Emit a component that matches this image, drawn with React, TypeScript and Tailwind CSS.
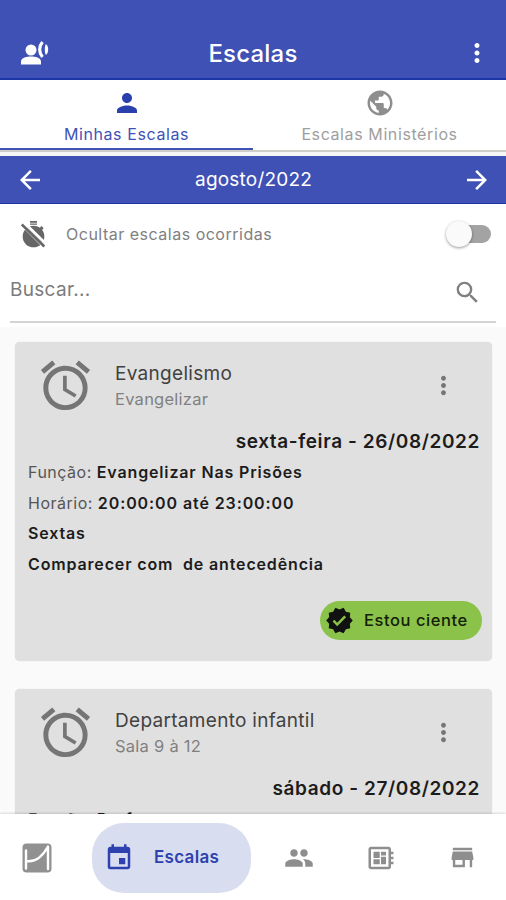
import {
  MdAccessAlarm,
  MdArrowBack,
  MdArrowForward,
  MdEvent,
  MdMoreVert,
  MdOutlineDeveloperBoard,
  MdPeople,
  MdPerson,
  MdPublic,
  MdSearch,
  MdStore,
  MdVerified,
} from "react-icons/md";

const schedules = [
  {
    title: "Evangelismo",
    subtitle: "Evangelizar",
    date: "sexta-feira - 26/08/2022",
    role: "Evangelizar Nas Prisões",
    time: "20:00:00 até 23:00:00",
    event: "Sextas",
    note: "Comparecer com  de antecedência",
  },
  {
    title: "Departamento infantil",
    subtitle: "Sala 9 à 12",
    date: "sábado - 27/08/2022",
    role: "Professora",
    time: "09:00:00 até 12:00:00",
    event: "Sábados",
    note: "Comparecer com  de antecedência",
  },
];

function VoiceIcon() {
  return (
    <svg width="30" height="26" viewBox="0 0 30 26" fill="currentColor">
      <circle cx="11" cy="10" r="5.5" />
      <path d="M1 24.500v-3c0-4 6-5 10-5s10 1 10 5v3z" />
      <path d="M22.500 2c-3.800 4.500-3.800 10.500 0 15" fill="none" stroke="currentColor" strokeWidth="3.200" />
      <path d="M25.500 4.500h1c2.200 2.500 2.200 7.500 0 10h-1c-1-3-1-7 0-10z" />
    </svg>
  );
}

function TimerOffIcon() {
  return (
    <svg width="26" height="28" viewBox="0 0 26 28" fill="currentColor">
      <path d="M9 1h7v1.800H9zM9 3.400h7v1.400H9z" />
      <circle cx="12.500" cy="16.500" r="10.800" />
      <path d="m18.500 8 2-2 2.200 2.200-2 2z" />
      <path d="m2.500 2 23 22.500" fill="none" stroke="white" strokeWidth="3" />
      <path d="m.8 4.500 22.500 22.500" fill="none" stroke="white" strokeWidth="3" />
      <path d="m.8 4.500 22.500 22" fill="none" stroke="currentColor" strokeWidth="2.600" />
    </svg>
  );
}

function LogoIcon() {
  return (
    <svg width="30" height="30" viewBox="0 0 30 30" fill="none">
      <rect x=".5" y=".5" width="29" height="29" rx="4" fill="#919191" />
      <path
        d="M4 7.500v18M4 18c9 1.500 16-3.500 22-14.500v22.500"
        stroke="white"
        strokeWidth="2.400"
        strokeLinejoin="round"
        strokeLinecap="round"
      />
    </svg>
  );
}

function ScheduleCard({ item }: { item: (typeof schedules)[number] }) {
  return (
    <article className="h-[319px] shrink-0 rounded-[5px] bg-[#e0e0e0] shadow-[0_0_1px_#ccc]">
      <div className="flex h-[84px] items-start pl-[21px] pt-[15px]">
        <MdAccessAlarm size={59} className="-mt-[1px] text-[#757575]" />
        <div className="ml-[20px] flex-1 pt-[4px]">
          <h2 className="text-[19px] leading-[26px] tracking-[0.3px] text-[#424242]">{item.title}</h2>
          <p className="text-[16.5px] leading-[25px] tracking-[0.25px] text-[#808080]">{item.subtitle}</p>
        </div>
        <MdMoreVert size={29} className="mr-[34px] mt-[14px] text-[#757575]" />
      </div>
      <p className="pr-[12px] text-right text-[19px] font-semibold leading-[31px] tracking-[0.6px] text-[#1c1c1c]">
        {item.date}
      </p>
      <div className="whitespace-pre pl-[13px] text-[16px] leading-[30.500px] text-[#1c1c1c]">
        <p>
          <span className="tracking-[0.5px] text-[#555]">Função: </span>
          <span className="font-semibold tracking-[0.85px]">{item.role}</span>
        </p>
        <p>
          <span className="tracking-[0.5px] text-[#555]">Horário: </span>
          <span className="font-semibold tracking-[0.9px]">{item.time}</span>
        </p>
        <p className="font-semibold tracking-[0.85px]">{item.event}</p>
        <p className="font-semibold tracking-[0.85px]">{item.note}</p>
      </div>
      <div className="mt-[22px] flex justify-end pr-[10px]">
        <button className="flex h-[39px] w-[162px] items-center rounded-full bg-[#8bc34a] pl-[5px] text-[#142006]">
          <MdVerified size={29} className="text-[#111]" />
          <span className="ml-[10px] text-[16.5px] font-medium tracking-[0.55px]">Estou ciente</span>
        </button>
      </div>
    </article>
  );
}

export default function App() {
  return (
    <div className="flex h-[900px] w-[506px] flex-col overflow-hidden bg-[#fafafa] font-['Inter','Liberation_Sans',sans-serif]">
      <header className="flex h-[80px] shrink-0 items-center border-b-2 border-[#1d36a5] bg-[#3f51b5] pl-[20px] pr-[14px] pt-[27px] text-white">
        <VoiceIcon />
        <h1 className="flex-1 pr-[6px] pt-[2px] text-center text-[24px] font-medium tracking-[0.2px]">Escalas</h1>
        <MdMoreVert size={30} />
      </header>

      <nav className="flex h-[76px] shrink-0 border-b-4 border-[#f5f5f5] bg-white text-[16px]">
        <button className="flex flex-1 flex-col items-center border-b-2 border-[#cfcdca]">
          <span className="flex w-full flex-1 flex-col items-center border-b-2 border-[#3f51b5] pt-[8px] text-[#3f51b5]">
            <MdPerson size={30} className="text-[#2a41ad]" />
            <span className="mt-[3px] leading-[26px] tracking-[0.6px]">Minhas Escalas</span>
          </span>
        </button>
        <button className="flex flex-1 flex-col items-center border-b-2 border-[#cfcdca] pt-[8px] text-[#9e9e9e]">
          <MdPublic size={30} className="text-[#8e8e8e]" />
          <span className="mt-[3px] leading-[26px] tracking-[0.6px]">Escalas Ministérios</span>
        </button>
      </nav>

      <div className="flex h-[48px] shrink-0 items-center justify-between border-b border-[#1d36a5] bg-[#3f51b5] pl-[15px] pr-[14px] text-white">
        <MdArrowBack size={30} />
        <span className="pt-[2px] text-[19px] tracking-[0.2px]">agosto/2022</span>
        <MdArrowForward size={30} />
      </div>

      <section className="h-[123px] shrink-0 bg-white px-[10px]">
        <div className="flex h-[60px] items-center pl-[11px] pr-[5px]">
          <span className="text-[#666]">
            <TimerOffIcon />
          </span>
          <span className="ml-[19px] flex-1 text-[16px] tracking-[0.5px] text-[#808080]">Ocultar escalas ocorridas</span>
          <div className="flex h-[18px] w-[40px] items-center rounded-full bg-[#a3a3a3]">
            <div className="-ml-[5px] size-[26px] shrink-0 rounded-full bg-[#fafafa] shadow-[0_1px_3px_#0006]" />
          </div>
        </div>
        <div className="flex h-[59px] items-center justify-between border-b-2 border-[#d4d4d4] pr-[14px]">
          <span className="pb-[5px] text-[19px] tracking-[0.3px] text-[#7c7c7c]">Buscar...</span>
          <MdSearch size={29} className="text-[#808080]" />
        </div>
      </section>

      <main className="flex min-h-0 flex-1 flex-col gap-[28px] overflow-hidden pl-[15px] pr-[14px] pt-[15px]">
        {schedules.map((item) => (
          <ScheduleCard key={item.title} item={item} />
        ))}
      </main>

      <nav className="relative flex h-[86px] shrink-0 items-center bg-white pl-[22px] pr-[29px] pt-[1px] text-[#8e8e8e] shadow-[0_-1px_2px_#0002]">
        <LogoIcon />
        <button className="ml-[40px] flex h-[70px] w-[159px] items-center rounded-[32px] bg-[#d9ddf0] pl-[12px] text-[#2e42af]">
          <MdEvent size={30} />
          <span className="ml-[20px] text-[17px] font-semibold tracking-[0.3px]">Escalas</span>
        </button>
        <div className="ml-[33px] flex flex-1 items-center justify-between">
          <MdPeople size={30} />
          <MdOutlineDeveloperBoard size={30} />
          <MdStore size={29} />
        </div>
      </nav>
    </div>
  );
}
